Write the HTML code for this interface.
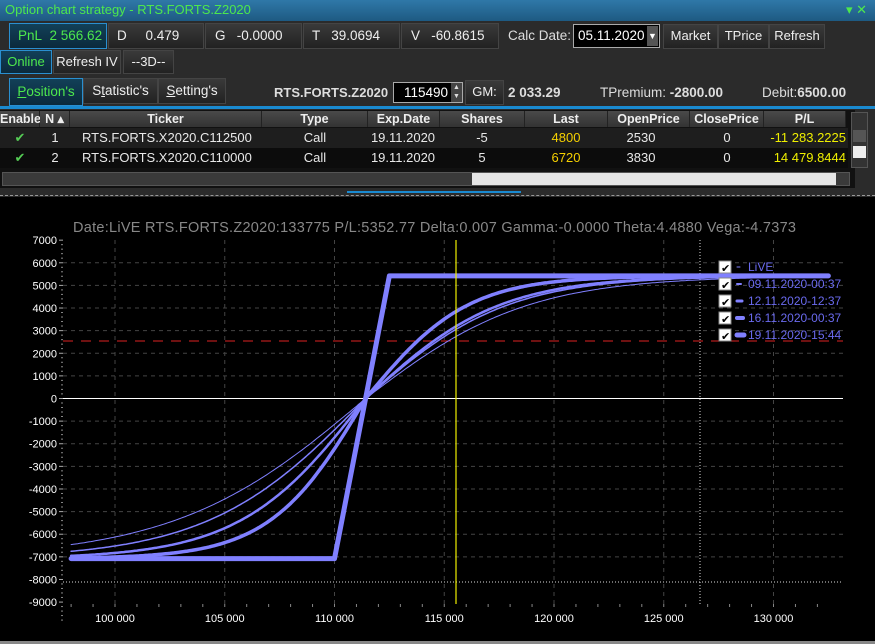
<!DOCTYPE html>
<html><head><meta charset="utf-8">
<style>
*{box-sizing:border-box;margin:0;padding:0}
body{width:875px;height:644px;background:#2b2b2b;font-family:"Liberation Sans",sans-serif;color:#e8e8e8;position:relative;overflow:hidden;font-size:13px}
div{white-space:nowrap}
.a{position:absolute}
.title{left:0;top:0;width:875px;height:21px;background:linear-gradient(#2f78a8,#1e5a82);color:#4de84d;font-size:13px;line-height:20px;padding-left:5px}
.btn{position:absolute;background:linear-gradient(#3a3a3a,#222);border:1px solid #444;color:#eee;font-size:13px;line-height:22px;text-align:center;overflow:hidden}
.sel{border:1px solid #2a8fd0;background:linear-gradient(#124058,#0b2a3c);color:#4de84d}
.hdr{position:absolute;top:111px;height:16px;background:linear-gradient(#4a4a4a,#333);border-right:1px solid #222;font-weight:bold;font-size:12.5px;text-align:center;line-height:16px;color:#eee}
.cell{position:absolute;font-size:13px;text-align:center;line-height:19px}
</style></head><body>
<div class="a title">Option chart strategy - RTS.FORTS.Z2020<span style="position:absolute;right:8px;top:0;color:#4de84d">▾ ✕</span></div>

<div class="btn sel" style="left:9px;top:23px;width:98px;height:26px;line-height:24px;text-align:left;padding-left:8px;font-size:13.5px">PnL&nbsp; 2 566.62</div>
<div class="btn" style="left:108px;top:23px;width:96px;height:26px;line-height:24px;text-align:left;padding-left:8px;font-size:13.5px">D &nbsp;&nbsp;&nbsp; 0.479</div>
<div class="btn" style="left:205px;top:23px;width:97px;height:26px;line-height:24px;text-align:left;padding-left:9px;font-size:13.5px">G &nbsp; -0.0000</div>
<div class="btn" style="left:303px;top:23px;width:97px;height:26px;line-height:24px;text-align:left;padding-left:8px;font-size:13.5px">T &nbsp; 39.0694</div>
<div class="btn" style="left:401px;top:23px;width:98px;height:26px;line-height:24px;text-align:left;padding-left:9px;font-size:13.5px">V &nbsp; -60.8615</div>
<div class="a" style="left:508px;top:28px;font-size:13.5px;color:#ddd">Calc Date:</div>
<div class="a" style="left:573px;top:24px;width:87px;height:24px;background:#000;border:1px solid #aaa;font-size:13.5px;line-height:22px;padding-left:4px;color:#fff">05.11.2020</div>
<div class="a" style="left:647px;top:26px;width:11px;height:20px;background:#555;color:#fff;font-size:9px;line-height:20px;text-align:center">▼</div>
<div class="btn" style="left:663px;top:24px;width:55px;height:25px">Market</div>
<div class="btn" style="left:718px;top:24px;width:51px;height:25px">TPrice</div>
<div class="btn" style="left:769px;top:24px;width:56px;height:25px">Refresh</div>

<div class="btn sel" style="left:0;top:50px;width:52px;height:24px">Online</div>
<div class="btn" style="left:53px;top:50px;width:68px;height:24px">Refresh IV</div>
<div class="btn" style="left:123px;top:50px;width:51px;height:24px">--3D--</div>

<div class="btn sel" style="left:9px;top:78px;width:74px;height:28px;line-height:26px;font-size:13.5px"><u>P</u>osition's</div>
<div class="btn" style="left:83px;top:78px;width:75px;height:26px;line-height:24px;font-size:13.5px">S<u>t</u>atistic's</div>
<div class="btn" style="left:158px;top:78px;width:68px;height:26px;line-height:24px;font-size:13.5px"><u>S</u>etting's</div>
<div class="a" style="left:274px;top:85px;font-weight:bold;font-size:13px;color:#ddd">RTS.FORTS.Z2020</div>
<div class="a" style="left:393px;top:82px;width:70px;height:21px;background:#000;border:1px solid #aaa;font-size:13.5px;line-height:19px;padding-left:10px;color:#fff">115490</div>
<div class="a" style="left:451px;top:83px;width:11px;height:19px;background:#444;color:#ddd;font-size:7px;line-height:9px;text-align:center">▲<br>▼</div>
<div class="btn" style="left:465px;top:80px;width:39px;height:25px">GM:</div>
<div class="a" style="left:508px;top:85px;font-weight:bold;font-size:13.5px;color:#ddd">2 033.29</div>
<div class="a" style="left:600px;top:85px;font-size:13.5px;color:#ddd">TPremium: <b>-2800.00</b></div>
<div class="a" style="left:762px;top:85px;font-size:13.5px;color:#ddd">Debit:<b>6500.00</b></div>
<div class="a" style="left:0;top:106px;width:875px;height:3px;background:#1a8ad0"></div>

<div class="a" style="left:0;top:110px;width:855px;height:78px;background:#111"></div>
<div class="hdr" style="left:0;width:40px">Enable</div>
<div class="hdr" style="left:40px;width:30px">N ▴</div>
<div class="hdr" style="left:70px;width:192px">Ticker</div>
<div class="hdr" style="left:262px;width:106px">Type</div>
<div class="hdr" style="left:368px;width:72px">Exp.Date</div>
<div class="hdr" style="left:440px;width:85px">Shares</div>
<div class="hdr" style="left:525px;width:83px">Last</div>
<div class="hdr" style="left:608px;width:82px">OpenPrice</div>
<div class="hdr" style="left:690px;width:74px">ClosePrice</div>
<div class="hdr" style="left:764px;width:82px">P/L</div>
<div class="a" style="left:0;top:128px;width:848px;height:20px;background:#1e1e1e"></div>
<div class="a" style="left:0;top:148px;width:848px;height:20px;background:#0c0c0c"></div>
<div class="cell" style="left:0;top:128px;width:40px;color:#5c5">✔</div>
<div class="cell" style="left:40px;top:128px;width:30px">1</div>
<div class="cell" style="left:82px;top:128px;text-align:left">RTS.FORTS.X2020.C112500</div>
<div class="cell" style="left:262px;top:128px;width:106px">Call</div>
<div class="cell" style="left:368px;top:128px;width:70px">19.11.2020</div>
<div class="cell" style="left:454px;top:128px;width:56px">-5</div>
<div class="cell" style="left:538px;top:128px;width:56px;color:#f5d000">4800</div>
<div class="cell" style="left:620px;top:128px;width:42px">2530</div>
<div class="cell" style="left:692px;top:128px;width:70px">0</div>
<div class="cell" style="left:766px;top:128px;width:80px;color:#ee0;text-align:right">-11 283.2225</div>
<div class="cell" style="left:0;top:148px;width:40px;color:#5c5">✔</div>
<div class="cell" style="left:40px;top:148px;width:30px">2</div>
<div class="cell" style="left:82px;top:148px;text-align:left">RTS.FORTS.X2020.C110000</div>
<div class="cell" style="left:262px;top:148px;width:106px">Call</div>
<div class="cell" style="left:368px;top:148px;width:70px">19.11.2020</div>
<div class="cell" style="left:454px;top:148px;width:56px">5</div>
<div class="cell" style="left:538px;top:148px;width:56px;color:#f5d000">6720</div>
<div class="cell" style="left:620px;top:148px;width:42px">3830</div>
<div class="cell" style="left:692px;top:148px;width:70px">0</div>
<div class="cell" style="left:766px;top:148px;width:80px;color:#ee0;text-align:right">14 479.8444</div>
<div class="a" style="left:851px;top:112px;width:17px;height:56px;background:#333;border:1px solid #555"></div>
<div class="a" style="left:853px;top:130px;width:13px;height:12px;background:#555"></div>
<div class="a" style="left:853px;top:146px;width:13px;height:12px;background:#eee"></div>
<div class="a" style="left:2px;top:172px;width:848px;height:14px;background:#3a3a3a;border:1px solid #555"></div>
<div class="a" style="left:472px;top:173px;width:364px;height:12px;background:#e6e6e6"></div>
<div class="a" style="left:347px;top:191px;width:174px;height:2px;background:#1a8ad0"></div>
<div class="a" style="left:0;top:195px;width:875px;height:1px;border-top:1px dashed #999"></div>

<div class="a" style="left:0;top:197px;width:875px;height:447px;background:#000">
<svg id="c" width="875" height="447" viewBox="0 197 875 447" style="position:absolute;left:0;top:0"></svg>
</div>
<div class="a" style="left:0;top:641px;width:875px;height:3px;background:#888"></div>

<script>
var s=document.getElementById('c'),h='';
function X(S){return 115+(S-100000)*0.02195}
function Y(v){return 398.5-v*0.02262}
h+='<text x="73" y="232" fill="#888" font-size="14.5" font-family="Liberation Sans" textLength="723">Date:LiVE  RTS.FORTS.Z2020:133775  P/L:5352.77  Delta:0.007  Gamma:-0.0000  Theta:4.4880  Vega:-4.7373</text>';
for(var v=7000;v>=-9000;v-=1000){var y=Y(v);
 h+='<text x="57" y="'+(y+4)+'" fill="#fff" font-size="11" text-anchor="end" font-family="Liberation Sans">'+v+'</text><line x1="59" x2="63" y1="'+y+'" y2="'+y+'" stroke="#aaa"/>';
 for(var k=1;k<5;k++)h+='<line x1="61" x2="63" y1="'+(y+k*4.5)+'" y2="'+(y+k*4.5)+'" stroke="#888"/>';
 if(v!=0&&v!=-8000&&v!=7000&&v!=-9000)h+='<line x1="63" x2="843" y1="'+y+'" y2="'+y+'" stroke="#444" stroke-dasharray="4,4"/>';}
for(var S=100000;S<=130000;S+=5000){var x=X(S);
 h+='<line x1="'+x+'" x2="'+x+'" y1="240" y2="604" stroke="#444" stroke-dasharray="4,4"/><text x="'+x+'" y="622" fill="#fff" font-size="11" text-anchor="middle" font-family="Liberation Sans">'+(S/1000)+' 000</text>';}
for(var S=98000;S<=132000;S+=1000)h+='<line x1="'+X(S)+'" x2="'+X(S)+'" y1="604" y2="607" stroke="#888"/>';
h+='<line x1="63" x2="843" y1="'+Y(0)+'" y2="'+Y(0)+'" stroke="#fff"/>';
h+='<line x1="63" x2="843" y1="582" y2="582" stroke="#ddd" stroke-dasharray="1,2"/>';
h+='<line x1="700" x2="700" y1="240" y2="604" stroke="#ddd" stroke-dasharray="1,2"/>';
h+='<line x1="63" x2="843" y1="341" y2="341" stroke="#d22" stroke-dasharray="10,8"/>';
function th(t){return Math.tanh(t)}
var C0=111416;
var cv=[[8700,7400,1],[7160,6450,1.5],[5700,6100,2.5],[4360,4650,3.5]];
cv.forEach(function(c){var sL=c[0],sR=c[1],p='';
 for(var S=98000;S<=132500;S+=100){var u=S-C0,val=u<0?-7080*th(-u/sL):5420*th(u/sR);p+=(p?'L':'M')+X(S).toFixed(1)+' '+Y(val).toFixed(1);}
 h+='<path d="'+p+'" fill="none" stroke="#8080ff" stroke-width="'+c[2]+'" stroke-linejoin="round" stroke-linecap="round"/>';});
h+='<path d="M'+X(98000)+' '+Y(-7080)+'L'+X(110000)+' '+Y(-7080)+'L'+X(112500)+' '+Y(5420)+'L'+X(132500)+' '+Y(5420)+'" fill="none" stroke="#8080ff" stroke-width="5" stroke-linejoin="round" stroke-linecap="round"/>';
h+='<line x1="456" x2="456" y1="240" y2="604" stroke="#ee0" stroke-width="1.2"/>';
var lg=['LiVE','09.11.2020-00:37','12.11.2020-12:37','16.11.2020-00:37','19.11.2020-15:44'],lw=[1,2,3,4,5];
lg.forEach(function(t,i){var y=267+i*17;
 h+='<rect x="719" y="'+(y-6)+'" width="12" height="12" fill="#fff" stroke="#888"/><text x="721" y="'+(y+5)+'" font-size="11" fill="#000">✔</text>';
 h+='<line x1="737" x2="'+(740+i)+'" y1="'+y+'" y2="'+y+'" stroke="#8080ff" stroke-width="'+lw[i]+'" stroke-linecap="round"/>';
 h+='<text x="748" y="'+(y+4)+'" fill="#6a6aee" font-size="12" font-family="Liberation Sans">'+t+'</text>';});
s.innerHTML=h;
</script>
</body></html>
